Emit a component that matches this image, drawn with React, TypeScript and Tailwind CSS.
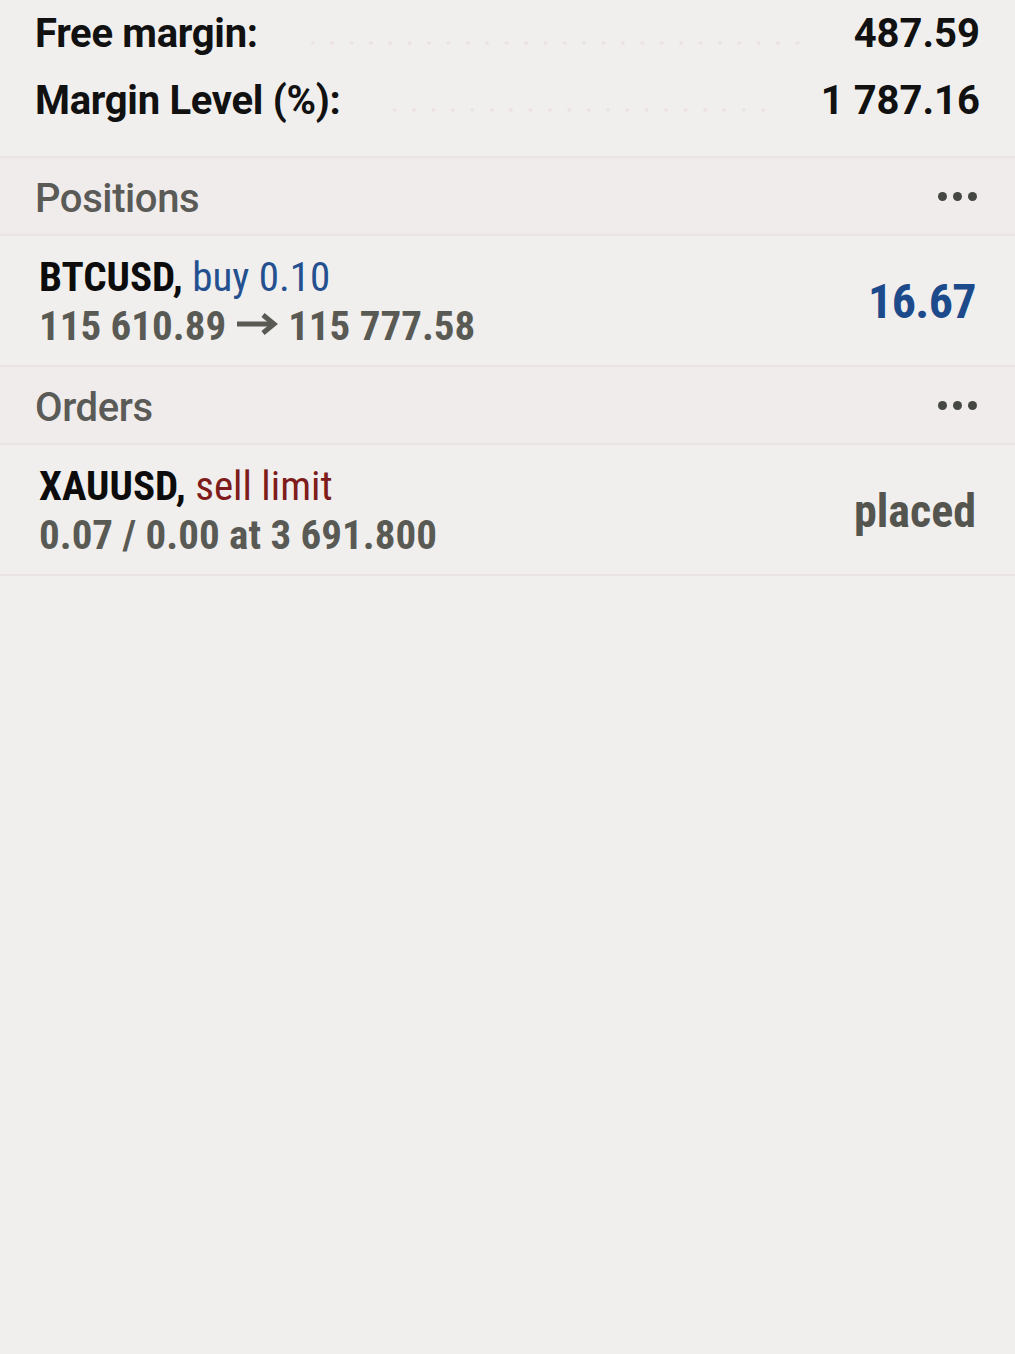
import React from "react";

const cond = "font-['Roboto_Condensed','Roboto',sans-serif]";

function SummaryRow({ label, value }: { label: string; value: string }) {
  return (
    <div className="flex items-center h-[67px] px-[35px]">
      <div className="font-['Roboto',sans-serif] font-bold text-[40px] text-[#111] leading-none tracking-[-0.3px]">
        {label}
      </div>
      <div className="flex-1 mx-[45px] mt-[18px] h-[4px] bg-[radial-gradient(circle,#ece2e2_1.5px,transparent_2px)] bg-[length:19.4px_4px]" />
      <div className="font-['Roboto',sans-serif] font-bold text-[40px] text-[#111] leading-none mr-[0px]">
        {value}
      </div>
    </div>
  );
}

function SectionHeader({ title }: { title: string }) {
  return (
    <div className="flex items-center justify-between h-[78px] px-[35px] pt-[5px] bg-[#f0ecec] border-b-2 border-[#e9e3e2]">
      <div className="font-['Roboto',sans-serif] font-medium text-[40px] text-[#5a5a57] leading-none tracking-[-0.4px]">
        {title}
      </div>
      <div className="flex gap-[6px] mr-[3px] -mt-[4px]">
        <span className="w-[9px] h-[9px] rounded-full bg-[#454743]" />
        <span className="w-[9px] h-[9px] rounded-full bg-[#454743]" />
        <span className="w-[9px] h-[9px] rounded-full bg-[#454743]" />
      </div>
    </div>
  );
}

function Arrow() {
  return (
    <svg width="42" height="24" viewBox="0 0 42 24" className="inline-block mx-[10px] -mt-[4px] align-middle">
      <path d="M1 12 H36" stroke="#5a5a55" strokeWidth="5" fill="none" />
      <path d="M27 3 L38 12 L27 21" stroke="#5a5a55" strokeWidth="5" fill="none" strokeLinejoin="miter" />
    </svg>
  );
}

export default function App() {
  return (
    <div className="min-h-[1354px] w-full bg-[#f0efee]">
      <div className="border-b-2 border-[#e9e3e2]">
        <SummaryRow label="Free margin:" value="487.59" />
        <SummaryRow label="Margin Level (%):" value="1 787.16" />
        <div className="h-[22px]" />
      </div>

      <SectionHeader title="Positions" />
      <div className="flex items-center justify-between h-[131px] pl-[39px] pr-[39px] pt-[2px] border-b-2 border-[#e9e3e2]">
        <div className={`${cond} text-[41px] leading-[49px]`}>
          <div>
            <span className="font-bold text-[#0c0c0c]">BTCUSD,</span>{" "}
            <span className="text-[#245090]">buy 0.10</span>
          </div>
          <div className="font-bold text-[#5a5a55] flex items-center">
            <span>115 610.89</span>
            <Arrow />
            <span>115 777.58</span>
          </div>
        </div>
        <div className={`${cond} font-bold text-[48px] text-[#1d4a8a] leading-none tracking-[-0.6px]`}>16.67</div>
      </div>

      <SectionHeader title="Orders" />
      <div className="flex items-center justify-between h-[131px] pl-[39px] pr-[39px] pt-[2px] border-b-2 border-[#e9e3e2]">
        <div className={`${cond} text-[41px] leading-[49px]`}>
          <div>
            <span className="font-bold text-[#0c0c0c]">XAUUSD,</span>{" "}
            <span className="text-[#7e1c1c]">sell limit</span>
          </div>
          <div className="font-bold text-[#5a5a55]">0.07 / 0.00 at 3 691.800</div>
        </div>
        <div className={`${cond} font-bold text-[46px] text-[#55554f] leading-none`}>placed</div>
      </div>
    </div>
  );
}
